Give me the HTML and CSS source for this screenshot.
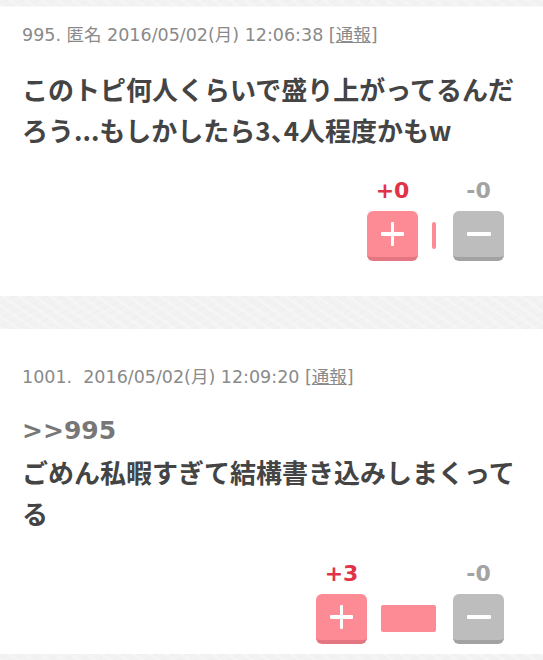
FILE: index.html
```html
<!DOCTYPE html>
<html lang="ja">
<head>
<meta charset="utf-8">
<title>コメント</title>
<link rel="stylesheet" href="styles.css">
</head>
<body>
<div class="page">
  <div class="strip strip-top"></div>
  <article class="post post-first">
    <div class="meta">995. 匿名 2016/05/02(月) 12:06:38 [<a class="report" href="#">通報</a>]</div>
    <div class="body">このトピ何人くらいで盛り上がってるんだろう...もしかしたら3、4人程度かもw</div>
    <div class="votes">
      <div class="count plus-count">+0</div>
      <div class="count minus-count">-0</div>
      <button class="btn btn-plus" aria-label="プラス"><span class="cross"></span></button>
      <div class="bar" style="width:4px"></div>
      <button class="btn btn-minus" aria-label="マイナス"><span class="dash"></span></button>
    </div>
  </article>
  <div class="strip strip-mid"></div>
  <article class="post post-second">
    <div class="meta">1001.&nbsp; 2016/05/02(月) 12:09:20 [<a class="report" href="#">通報</a>]</div>
    <div class="body"><div class="anchor">&gt;&gt;995</div>ごめん私暇すぎて結構書き込みしまくってる</div>
    <div class="votes">
      <div class="count plus-count">+3</div>
      <div class="count minus-count">-0</div>
      <button class="btn btn-plus" aria-label="プラス"><span class="cross"></span></button>
      <div class="bar" style="width:55px"></div>
      <button class="btn btn-minus" aria-label="マイナス"><span class="dash"></span></button>
    </div>
  </article>
  <div class="strip strip-bottom"></div>
</div>
</body>
</html>
```
FILE: styles.css
```css
html, body {
  margin: 0;
  padding: 0;
  background: #ffffff;
}

.page {
  width: 543px;
  display: flex;
  flex-direction: column;
  font-family: "DejaVu Sans", "Noto Sans CJK JP", sans-serif;
}

.strip {
  background-color: #f2f2f2;
  background-image:
    repeating-linear-gradient(35deg, rgba(255,255,255,0.25) 0 3px, rgba(0,0,0,0) 3px 9px),
    repeating-linear-gradient(-25deg, rgba(0,0,0,0.008) 0 2px, rgba(0,0,0,0) 2px 7px);
}

.strip-top {
  height: 6px;
  border-bottom: 1px solid #f8f8f8;
}

.strip-mid {
  height: 33px;
}

.strip-bottom {
  height: 7px;
}

.post {
  background: #ffffff;
  padding: 14px 22px 0 22px;
}

.post-first {
  padding-top: 15px;
  padding-bottom: 35px;
}

.post-second {
  padding-top: 35px;
  padding-bottom: 10px;
}

.meta {
  font-size: 17.5px;
  line-height: 24px;
  color: #8a8a8a;
  white-space: nowrap;
}

.report {
  color: #8a8a8a;
  text-decoration: underline;
  font-family: "Noto Sans CJK JP", sans-serif;
}

.body {
  margin-top: 21px;
  font-size: 26px;
  line-height: 41px;
  font-weight: bold;
  color: #444444;
  font-family: "Noto Sans CJK JP", sans-serif;
  font-feature-settings: "halt";
  width: 499px;
  word-break: break-all;
}

.anchor {
  color: #777777;
  font-family: "DejaVu Sans", "Noto Sans CJK JP", sans-serif;
  font-size: 25px;
  line-height: 41px;
  height: 41px;
}

.votes {
  display: grid;
  grid-template-columns: 51px auto 51px;
  grid-template-rows: 24px 50px;
  row-gap: 8px;
  justify-content: end;
  align-items: center;
  margin-top: 29px;
  margin-right: 17px;
}

.count {
  font-size: 22px;
  line-height: 24px;
  font-weight: bold;
  text-align: center;
}

.plus-count {
  grid-column: 1;
  grid-row: 1;
  color: #e23248;
}

.minus-count {
  grid-column: 3;
  grid-row: 1;
  color: #a3a3a3;
}

.btn {
  position: relative;
  width: 51px;
  height: 50px;
  padding: 0;
  border: none;
  border-radius: 6px;
  box-sizing: border-box;
  display: flex;
  align-items: center;
  justify-content: center;
  cursor: pointer;
}

.btn-plus {
  grid-column: 1;
  grid-row: 2;
  background: #fd8b96;
  border-bottom: 4px solid #e47682;
}

.btn-minus {
  grid-column: 3;
  grid-row: 2;
  background: #bdbdbd;
  border-bottom: 4px solid #a2a2a2;
}

.cross {
  position: relative;
  width: 23px;
  height: 24px;
}

.cross::before,
.cross::after {
  content: "";
  position: absolute;
  background: #ffffff;
  border-radius: 1px;
}

.cross::before {
  left: 0;
  right: 0;
  top: 10px;
  height: 4px;
}

.cross::after {
  top: 0;
  bottom: 0;
  left: 10px;
  width: 3px;
}

.dash {
  width: 24px;
  height: 4px;
  background: #ffffff;
  border-radius: 1px;
}

.bar {
  grid-column: 2;
  grid-row: 2;
  justify-self: end;
  height: 27px;
  margin-left: 14px;
  margin-right: 17px;
  margin-bottom: 2px;
  background: #fd8b96;
  border-radius: 2px;
}
```
